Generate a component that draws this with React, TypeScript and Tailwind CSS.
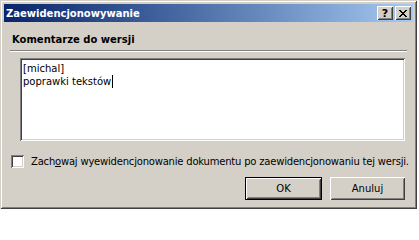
import React from 'react';

const raised =
  'shadow-[inset_1px_1px_#ffffff,inset_-1px_-1px_#404040,inset_2px_2px_#d4d0c8,inset_-2px_-2px_#808080]';
const sunken =
  'shadow-[inset_1px_1px_#808080,inset_-1px_-1px_#ffffff,inset_2px_2px_#404040,inset_-2px_-2px_#d4d0c8]';

function TitleButton({ children }: { children: React.ReactNode }) {
  return (
    <div className={`w-[16px] h-[14px] bg-[#d4d0c8] flex items-center justify-center ${raised}`}>
      {children}
    </div>
  );
}

export default function App() {
  return (
    <div className="w-[419px] h-[210px] bg-white font-['DejaVu_Sans',Verdana,sans-serif] text-[10px] text-black leading-[13px]">
      <div
        className={`w-[417px] h-[209px] bg-[#d4d0c8] p-[4px] flex flex-col shadow-[inset_1px_1px_#d4d0c8,inset_-1px_-1px_#404040,inset_2px_2px_#ffffff,inset_-2px_-2px_#808080]`}
      >
        {/* Title bar */}
        <div className="h-[18px] shrink-0 flex items-center justify-between pl-[2px] pr-[2px] bg-gradient-to-r from-[#0a246a] to-[#a6caf0]">
          <span className="text-white font-bold">Zaewidencjonowywanie</span>
          <div className="flex gap-[2px]">
            <TitleButton>
              <span className="font-bold text-[11px] leading-none">?</span>
            </TitleButton>
            <TitleButton>
              <svg width="8" height="7" viewBox="0 0 8 7" shapeRendering="crispEdges">
                <path
                  d="M0 0h2v1H0zM6 0h2v1H6zM1 1h2v1H1zM5 1h2v1H5zM2 2h4v1H2zM3 3h2v1H3zM2 4h4v1H2zM1 5h2v1H1zM5 5h2v1H5zM0 6h2v1H0zM6 6h2v1H6z"
                  fill="#000"
                />
              </svg>
            </TitleButton>
          </div>
        </div>

        {/* Body */}
        <div className="flex flex-col px-[6px] pt-[11px]">
          <div className="font-bold pl-[2px]">Komentarze do wersji</div>
          <div className="mt-[4px] h-[2px] border-t border-[#808080] border-b-white border-b" />
          <div className={`ml-[10px] mr-[2px] mt-[6px] h-[83px] shrink-0 bg-white ${sunken} pl-[3px] pt-[4px]`}>
            <div>[michal]</div>
            <div className="flex items-center">
              poprawki tekstów
              <span className="inline-block w-px h-[13px] bg-black ml-[1px]" />
            </div>
          </div>

          <div className="flex items-center mt-[14px] pl-[1px] whitespace-nowrap">
            <div className={`w-[13px] h-[13px] shrink-0 bg-white ${sunken}`} />
            <span className="ml-[7px] tracking-[-0.2px]">
              Zach<span className="underline underline-offset-1">o</span>waj wyewidencjonowanie dokumentu po zaewidencjonowaniu tej wersji.
            </span>
          </div>

          <div className="flex justify-end gap-[8px] mt-[9px] pr-[2px]">
            <div className="w-[77px] h-[23px] border border-black">
              <div className={`w-full h-full flex items-center justify-center bg-[#d4d0c8] ${raised}`}>OK</div>
            </div>
            <div className={`w-[75px] h-[23px] flex items-center justify-center bg-[#d4d0c8] ${raised}`}>Anuluj</div>
          </div>
        </div>
      </div>
    </div>
  );
}
